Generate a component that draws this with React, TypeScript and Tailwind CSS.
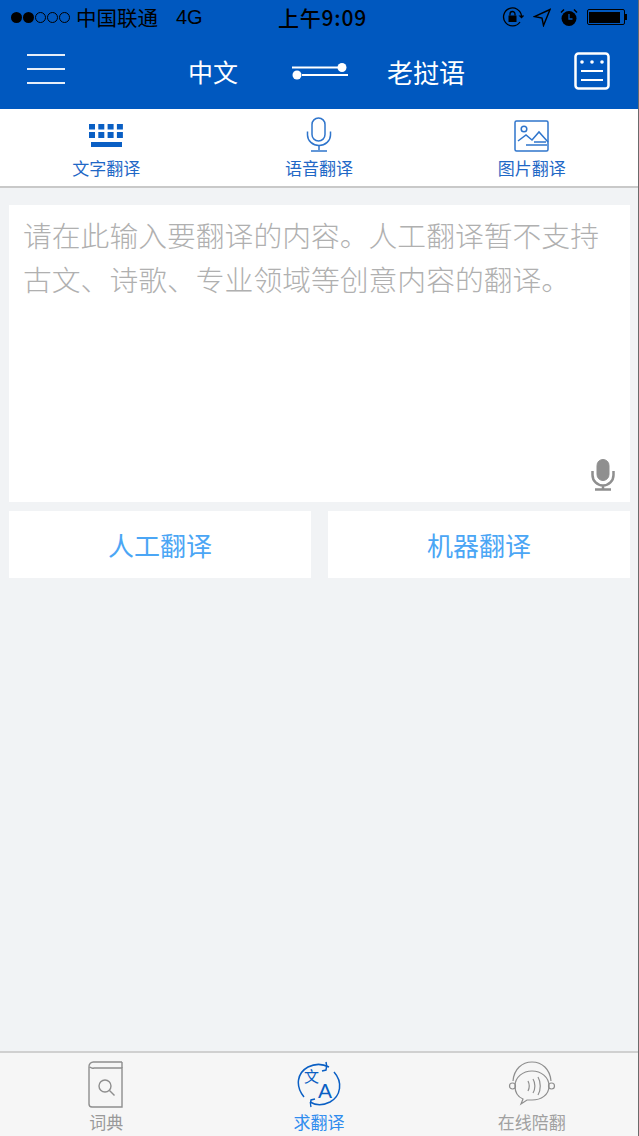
import React from 'react';

const cjk = "font-['Noto_Sans_CJK_SC','Noto_Sans',sans-serif]";

const StatusBar = () => (
  <div className={`h-[37px] flex items-center pl-[11px] pb-[3px] text-black ${cjk}`}>
    <div className="flex items-center w-[267px]">
      <div className="flex gap-[1px]">
        <span className="w-[11px] h-[11px] rounded-full bg-black" />
        <span className="w-[11px] h-[11px] rounded-full bg-black" />
        <span className="w-[11px] h-[11px] rounded-full border border-black" />
        <span className="w-[11px] h-[11px] rounded-full border border-black" />
        <span className="w-[11px] h-[11px] rounded-full border border-black" />
      </div>
      <span className="ml-[6px] text-[20.5px] leading-none">中国联通</span>
      <span className="ml-[18px] text-[20px] leading-none font-['Liberation_Sans']">4G</span>
    </div>
    <div className="text-[21px] leading-none tracking-[0.8px] font-medium">上午9:09</div>
    <div className="flex items-center ml-[135px] gap-[9px]">
      <svg width="22" height="22" viewBox="0 0 22 22" fill="none" stroke="#000" strokeWidth="1.3">
        <path d="M18 16a9 9 0 1 1 1.500-6" />
        <path d="M16.500 9.500l3 3 3-3z" fill="#000" stroke="none" />
        <rect x="6.500" y="9.500" width="8" height="6.500" fill="#000" stroke="none" />
        <path d="M8 9.500V8a2.500 2.500 0 0 1 5 0v1.500" />
      </svg>
      <svg width="18" height="19" viewBox="0 0 18 19" fill="none" stroke="#000" strokeWidth="1.400">
        <path d="M17 1.500L1.500 8.500l7.500 1.500 1.500 7.500z" />
      </svg>
      <svg width="18" height="19" viewBox="0 0 18 19">
        <circle cx="9" cy="10.500" r="7.500" fill="#000" />
        <path d="M9 6v5h3.500" stroke="#0058bf" strokeWidth="1.300" fill="none" />
        <path d="M1 4.500L4 1.500M17 4.500L14 1.500" stroke="#000" strokeWidth="1.500" />
      </svg>
      <div className="flex items-center">
        <div className="w-[38px] h-[16px] border border-black rounded-[2px] p-[1.500px]">
          <div className="w-[31px] h-full bg-black" />
        </div>
        <div className="w-[2px] h-[6px] bg-black" />
      </div>
    </div>
  </div>
);

const NavBar = () => (
  <div className={`h-[72px] flex items-center relative text-white ${cjk}`}>
    <div className="ml-[27px] w-[38px] flex flex-col gap-[12px] pb-[9px]">
      <div className="h-[2px] bg-white/90" />
      <div className="h-[2px] bg-white/90" />
      <div className="h-[2px] bg-white/90" />
    </div>
    <div className="ml-[123px] text-[25px] leading-none pb-[3px]">中文</div>
    <svg className="ml-[53px] mb-[5px]" width="58" height="18" viewBox="0 0 58 18">
      <path d="M1 5.500H47" stroke="#fff" strokeWidth="2" />
      <circle cx="51" cy="5.500" r="4.500" fill="#fff" />
      <path d="M11 13H57" stroke="#fff" strokeWidth="2" />
      <circle cx="6" cy="13" r="4.500" fill="#fff" />
    </svg>
    <div className="ml-[38px] text-[26px] leading-none pb-[3px]">老挝语</div>
    <svg className="ml-auto mr-[28px] mb-[5px]" width="36" height="38" viewBox="0 0 36 38" fill="none">
      <rect x="1.500" y="1.500" width="33" height="35" rx="3" stroke="#fff" strokeWidth="2.500" />
      <circle cx="8" cy="10" r="1.800" fill="#fff" />
      <circle cx="18" cy="10" r="1.800" fill="#fff" />
      <circle cx="28" cy="10" r="1.800" fill="#fff" />
      <path d="M7 19H29M7 28H29" stroke="#fff" strokeWidth="2.200" />
    </svg>
  </div>
);

const TabIcon = ({ kind }: { kind: string }) => {
  if (kind === 'keyboard') {
    return (
      <svg className="mb-[4px]" width="36" height="24" viewBox="0 0 36 24" fill="#0a5fc4">
        {[0, 1, 2, 3].map((i) => (
          <rect key={`a${i}`} x={1 + i * 9.300} y="0" width="6" height="5.500" />
        ))}
        {[0, 1, 2, 3].map((i) => (
          <rect key={`b${i}`} x={1 + i * 9.300} y="8" width="6" height="6" />
        ))}
        <rect x="3" y="18" width="31" height="5" />
      </svg>
    );
  }
  if (kind === 'mic') {
    return (
      <svg className="mb-[-1px]" width="26" height="36" viewBox="0 0 26 36" fill="none" stroke="#2f75cc" strokeWidth="1.500">
        <rect x="6" y="1" width="13" height="23" rx="6.500" />
        <path d="M1.500 14.500V18a11.500 10.500 0 0 0 23 0v-3.500" />
        <path d="M13 29v4M5 34h16" />
      </svg>
    );
  }
  return (
    <svg width="36" height="32" viewBox="0 0 36 32" fill="none" stroke="#2f75cc" strokeWidth="1.500">
      <rect x="1" y="1" width="33" height="30" rx="1.500" />
      <circle cx="10" cy="9" r="2.800" />
      <path d="M4 21l8-6 6 5 7-8 9 10" />
      <path d="M12 25h21M20 22h12" />
    </svg>
  );
};

const tabs = [
  { label: '文字翻译', kind: 'keyboard' },
  { label: '语音翻译', kind: 'mic' },
  { label: '图片翻译', kind: 'image' },
];

const TabStrip = () => (
  <div className={`h-[79px] bg-white border-b-2 border-[#c9c9c9] flex ${cjk}`}>
    {tabs.map((tab) => (
      <div key={tab.label} className="flex-1 flex flex-col items-center">
        <div className="h-[43px] flex items-end">
          <TabIcon kind={tab.kind} />
        </div>
        <div className="mt-[6px] text-[17px] leading-[20px] text-[#1f68c6]">{tab.label}</div>
      </div>
    ))}
  </div>
);

const Composer = () => (
  <div className={`flex-1 bg-[#f1f3f5] pt-[17px] pl-[9px] pr-[8px] ${cjk}`}>
    <div className="h-[297px] bg-white relative pl-[14px] pr-[10px] pt-[8px]">
      <p className="text-[28.800px] leading-[44px] font-light text-[#b0b0b0]">
        请在此输入要翻译的内容。人工翻译暂不支持古文、诗歌、专业领域等创意内容的翻译。
      </p>
      <svg className="absolute right-[15px] bottom-[11px]" width="24" height="32" viewBox="0 0 24 32" fill="none" stroke="#8f8f8f">
        <rect x="6" y="0.500" width="12" height="21" rx="6" fill="#8f8f8f" />
        <path d="M1.500 12v4a10.500 10.500 0 0 0 21 0v-4M12 26v4M4 30.500h16" strokeWidth="2.500" />
      </svg>
    </div>
    <div className="mt-[9px] flex gap-[17px]">
      <div className="flex-1 h-[67px] bg-white flex items-center justify-center text-[26px] text-[#4ba6f5]">人工翻译</div>
      <div className="flex-1 h-[67px] bg-white flex items-center justify-center text-[26px] text-[#4ba6f5]">机器翻译</div>
    </div>
  </div>
);

const BottomBar = () => (
  <div className={`h-[85px] bg-[#f6f6f6] border-t-2 border-[#d0d0d0] flex ${cjk}`}>
    <div className="flex-1 flex flex-col items-center pt-[8px] text-[#999999]">
      <svg width="36" height="48" viewBox="0 0 36 48" fill="none" stroke="#8e8e8e" strokeWidth="1.400">
        <path d="M34 1H6a4.500 4.500 0 0 0-5 5v37a3 3 0 0 0 3 3h30V7H6a4 4 0 0 1-4-1" />
        <path d="M34 1v6" />
        <circle cx="17" cy="25" r="6" />
        <path d="M21.500 29.500l5 5" />
      </svg>
      <div className="mt-[3px] text-[17px] leading-[20px]">词典</div>
    </div>
    <div className="flex-1 flex flex-col items-center pt-[8px] text-[#2f8cee]">
      <svg width="46" height="48" viewBox="0 0 46 48" fill="none" stroke="#0a5fc4" strokeWidth="1.500">
        <path d="M8 36C-1 25 1 12 12 6c8-4 15-3 21 0" />
        <path d="M30 1c1 3 1 5 0 8l-4 1" />
        <path d="M38 11c9 10 7 24-4 30-8 4-15 3-20 0" />
        <path d="M15 46c-1-3-1-4 0-7l4-1" />
        <text x="8" y="21" fontSize="15" fill="#0a5fc4" stroke="none" fontFamily="Noto Sans CJK SC">文</text>
        <text x="22" y="37" fontSize="21" fill="#0a5fc4" stroke="none" fontFamily="Liberation Sans">A</text>
      </svg>
      <div className="mt-[3px] text-[17px] leading-[20px]">求翻译</div>
    </div>
    <div className="flex-1 flex flex-col items-center pt-[8px] text-[#a0a0a0]">
      <svg width="48" height="48" viewBox="0 0 48 48" fill="none" stroke="#8e8e8e" strokeWidth="1.200">
        <path d="M5 20C6 8 14 1 24 1s18 7 19 19" />
        <circle cx="4.500" cy="25" r="3" />
        <circle cx="43.500" cy="25" r="3" />
        <path d="M15 38c-5-2-8-7-8-13 0-9 8-15 17-15s17 6 17 15-8 14-17 14c-2 0-3 0-5 0l-6 4z" />
        <path d="M20 20c1.500 3 1.500 7 0 10M25 18c2.500 4 2.500 10 0 14M30 16c3 5 3 13 0 18" />
      </svg>
      <div className="mt-[3px] text-[17px] leading-[20px]">在线陪翻</div>
    </div>
  </div>
);

export default function App() {
  return (
    <div className="w-[639px] h-[1136px] flex flex-col overflow-hidden border-r border-[#6b6b6b] bg-[#f1f3f5]">
      <div className="bg-[#0058bf] h-[109px] shrink-0">
        <StatusBar />
        <NavBar />
      </div>
      <TabStrip />
      <Composer />
      <BottomBar />
    </div>
  );
}
